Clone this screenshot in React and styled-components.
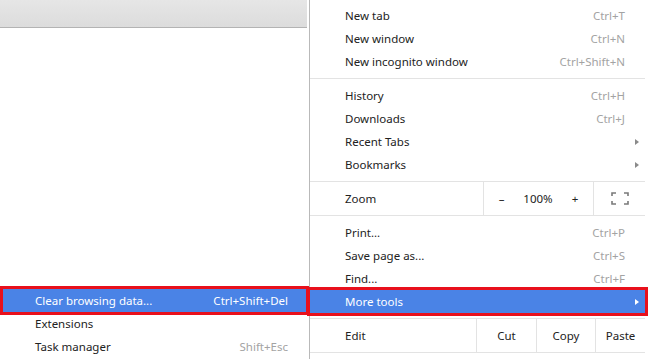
import styled, { createGlobalStyle } from "styled-components";

/* ---------- data ---------- */
const groups = [
  [
    { label: "New tab", key: "Ctrl+T" },
    { label: "New window", key: "Ctrl+N" },
    { label: "New incognito window", key: "Ctrl+Shift+N" },
  ],
  [
    { label: "History", key: "Ctrl+H" },
    { label: "Downloads", key: "Ctrl+J" },
    { label: "Recent Tabs", sub: true },
    { label: "Bookmarks", sub: true },
  ],
];

const tail = [
  { label: "Print...", key: "Ctrl+P" },
  { label: "Save page as...", key: "Ctrl+S" },
  { label: "Find...", key: "Ctrl+F" },
  { label: "More tools", sub: true, active: true },
];

const tools = [
  { label: "Clear browsing data...", key: "Ctrl+Shift+Del", active: true },
  { label: "Extensions" },
  { label: "Task manager", key: "Shift+Esc" },
];

function FullscreenIcon() {
  return (
    <svg width="18" height="13" viewBox="0 0 18 13" fill="none">
      <path
        d="M1 4V1h4M13 1h4v3M17 9v3h-4M5 12H1V9"
        stroke="#7a7a7a"
        strokeWidth="1.6"
      />
    </svg>
  );
}

function MenuItem({ item }) {
  return (
    <Row $active={item.active}>
      <Label>{item.label}</Label>
      {item.key && <Key $pad={14}>{item.key}</Key>}
      {item.sub && <Arrow $active={item.active} />}
    </Row>
  );
}

export default function App() {
  return (
    <>
      <Global />
      <Page>
        {/* --- submenu on the left --- */}
        <Pane>
          <Toolbar />
          <SubList>
            {tools.map((t) => (
              <SubRow key={t.label} $active={t.active}>
                <Label>{t.label}</Label>
                {t.key && <Key $active={t.active}>{t.key}</Key>}
              </SubRow>
            ))}
          </SubList>
        </Pane>

        {/* --- main menu --- */}
        <Menu>
          {groups.map((g, i) => (
            <div key={i}>
              {i > 0 && <Sep />}
              {g.map((it) => (
                <MenuItem key={it.label} item={it} />
              ))}
            </div>
          ))}

          <BtnRow>
            <Label>Zoom</Label>
            <Cell $w={36}>–</Cell>
            <Cell $w={38} $plain>
              100%
            </Cell>
            <Cell $w={36} $plain>
              +
            </Cell>
            <Cell $w={52}>
              <FullscreenIcon />
            </Cell>
          </BtnRow>

          {tail.map((it) => (
            <MenuItem key={it.label} item={it} />
          ))}

          <BtnRow>
            <Label>Edit</Label>
            <Cell $w={60}>Cut</Cell>
            <Cell $w={59}>Copy</Cell>
            <Cell $w={50}>Paste</Cell>
          </BtnRow>
        </Menu>
      </Page>
    </>
  );
}

/* ───────── styled-components ───────── */

const Global = createGlobalStyle`
  html, body { margin: 0; padding: 0; background: #fff; }
  body { font-family: "Noto Sans", "Open Sans", sans-serif; }
`;

const Page = styled.div`
  display: flex;
  width: 650px;
  height: 359px;
  overflow: hidden;
  font-size: 11.5px;
  color: #222;
`;

const Pane = styled.div`
  width: 309px;
  border-right: 1px solid #b9b9b9;
  display: flex;
  flex-direction: column;
`;

const Toolbar = styled.div`
  height: 27px;
  margin-right: 2px;
  background: linear-gradient(#e6e6e6, #dcdcdc);
  border-bottom: 1px solid #b3b3b3;
`;

const SubList = styled.div`
  margin-top: auto;
  padding-bottom: 1px;
`;

const SubRow = styled.div`
  height: 23px;
  margin: 0 3px;
  padding: 0 18px 0 32px;
  display: flex;
  align-items: center;
  background: ${({ $active }) => ($active ? "#4a83e6" : "transparent")};
  color: ${({ $active }) => ($active ? "#fff" : "#222")};
  outline: ${({ $active }) => ($active ? "3px solid #e8101c" : "none")};
`;

const Menu = styled.div`
  width: 335px;
  padding-top: 4px;
  background: #fff;
`;

const Row = styled.div`
  height: 23px;
  padding: 0 6px 0 35px;
  display: flex;
  align-items: center;
  background: ${({ $active }) => ($active ? "#4a83e6" : "transparent")};
  color: ${({ $active }) => ($active ? "#fff" : "#222")};
  outline: ${({ $active }) => ($active ? "3px solid #e8101c" : "none")};
`;

const Label = styled.span`
  flex: 1;
  white-space: nowrap;
`;

const Key = styled.span`
  padding-right: ${({ $pad }) => $pad || 0}px;
  color: ${({ $active }) => ($active ? "#fff" : "#a3a3a3")};
  white-space: nowrap;
`;

const Arrow = styled.span`
  width: 0;
  height: 0;
  border-top: 3.5px solid transparent;
  border-bottom: 3.5px solid transparent;
  border-left: 4px solid ${({ $active }) => ($active ? "#fff" : "#8a8a8a")};
`;

const Sep = styled.div`
  height: 1px;
  margin: 5px 0;
  background: #e3e3e3;
`;

const BtnRow = styled.div`
  height: 33px;
  margin: 5px 0;
  padding-left: 35px;
  display: flex;
  align-items: center;
  border-top: 1px solid #e3e3e3;
  border-bottom: 1px solid #e3e3e3;
`;

const Cell = styled.div`
  width: ${({ $w }) => $w}px;
  height: 100%;
  display: flex;
  align-items: center;
  justify-content: center;
  border-left: ${({ $plain }) => ($plain ? "none" : "1px solid #e3e3e3")};
  box-sizing: border-box;
`;
